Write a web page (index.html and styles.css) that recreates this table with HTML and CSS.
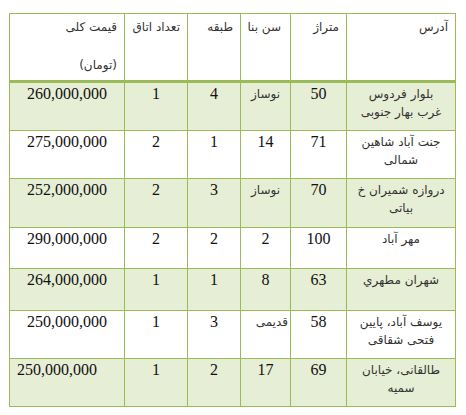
FILE: index.html
```html
<!DOCTYPE html>
<html lang="en">
<head>
    <meta charset="UTF-8">
    <meta name="viewport" content="width=device-width, initial-scale=1.0">
    <title>قیمت آپارتمان</title>
    <link rel="stylesheet" href="styles.css">
</head>
<body>
 <table class="price-table" dir="rtl">
  <colgroup>
   <col class="c-addr">
   <col class="c-area">
   <col class="c-age">
   <col class="c-floor">
   <col class="c-rooms">
   <col class="c-price">
  </colgroup>
  <thead>
   <tr class="head-row">
    <th><div class="hd">آدرس</div></th>
    <th><div class="hd">متراژ</div></th>
    <th><div class="hd age">سن بنا</div></th>
    <th><div class="hd">طبقه</div></th>
    <th><div class="hd">تعداد اتاق</div></th>
    <th><div class="hd">قیمت کلی</div><div class="hd unit">(تومان)</div></th>
   </tr>
  </thead>
  <tbody>
   <tr class="band r-tall1">
    <td class="fa">بلوار فردوس<br>غرب بهار جنوبی</td>
    <td class="num">50</td>
    <td class="fa">نوساز</td>
    <td class="num">4</td>
    <td class="num">1</td>
    <td class="num">260,000,000</td>
   </tr>
   <tr class="r-tall">
    <td class="fa">جنت آباد  شاهین<br>شمالی</td>
    <td class="num">71</td>
    <td class="num">14</td>
    <td class="num">1</td>
    <td class="num">2</td>
    <td class="num">275,000,000</td>
   </tr>
   <tr class="band r-tall1">
    <td class="fa">دروازه شمیران خ<br>بیاتی</td>
    <td class="num">70</td>
    <td class="fa">نوساز</td>
    <td class="num">3</td>
    <td class="num">2</td>
    <td class="num">252,000,000</td>
   </tr>
   <tr class="r-short">
    <td class="fa">مهر آباد</td>
    <td class="num">100</td>
    <td class="num">2</td>
    <td class="num">2</td>
    <td class="num">2</td>
    <td class="num">290,000,000</td>
   </tr>
   <tr class="band r-short1">
    <td class="fa">شهران مطهري</td>
    <td class="num">63</td>
    <td class="num">8</td>
    <td class="num">1</td>
    <td class="num">1</td>
    <td class="num">264,000,000</td>
   </tr>
   <tr class="r-tall">
    <td class="fa">یوسف آباد، پایین<br>فتحی شقاقی</td>
    <td class="num">58</td>
    <td class="fa old">قدیمی</td>
    <td class="num">3</td>
    <td class="num">1</td>
    <td class="num">250,000,000</td>
   </tr>
   <tr class="band r-tall">
    <td class="fa">طالقانی، خیابان<br>سمیه</td>
    <td class="num">69</td>
    <td class="num">17</td>
    <td class="num">2</td>
    <td class="num">1</td>
    <td class="num shift">250,000,000</td>
   </tr>
  </tbody>
 </table>
</body>
</html>
```

FILE: styles.css
```css
body {
    margin: 0;
    padding: 13px 0 0 9px;
    background-color: #ffffff;
    color: #111;
}
.price-table {
    border-collapse: collapse;
    table-layout: fixed;
    width: 446px;
}
.c-addr { width: 109px; }
.c-area { width: 56px; }
.c-age { width: 50px; }
.c-floor { width: 53px; }
.c-rooms { width: 63px; }
.c-price { width: 115px; }

th, td {
    border: 1px solid #9bbb59;
    vertical-align: top;
    padding: 0;
}
th {
    font-weight: normal;
}
.hd {
    font-family: "DejaVu Sans", sans-serif;
    font-size: 12px;
    line-height: 16px;
    text-align: right;
    white-space: nowrap;
    padding: 5px 7px 0 2px;
    color: #333;
}
.hd.age { padding-right: 9px; }
.hd.unit { padding-top: 22px; }
.head-row { height: 68px; }
.head-row th { border-bottom: 3px solid #9bbb59; }

td {
    text-align: center;
}
td.num {
    font-family: "Liberation Serif", "Times New Roman", serif;
    font-size: 16px;
    line-height: 18px;
    padding-top: 2px;
}
td.fa {
    font-family: "DejaVu Sans", sans-serif;
    font-size: 12px;
    line-height: 18px;
    padding-top: 2px;
    color: #333;
}
td.old { text-align: right; padding-right: 2px; }
td.shift { padding-right: 20px; }

.band td { background-color: #e6eed5; }
.r-tall { height: 48px; }
.r-tall1 { height: 49px; }
.r-short { height: 41px; }
.r-short1 { height: 42px; }
```
